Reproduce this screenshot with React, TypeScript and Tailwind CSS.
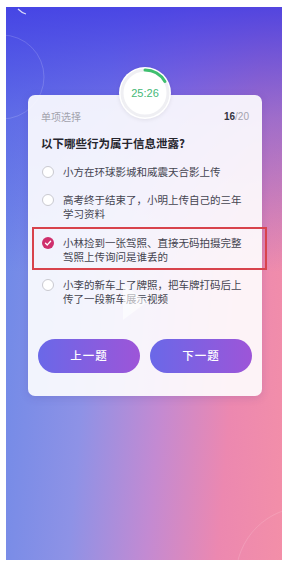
import React from "react";

const Radio: React.FC<{ checked?: boolean }> = ({ checked }) =>
	checked ? (
		<span className="mt-[1px] ml-[1px] flex h-[12px] w-[12px] shrink-0 items-center justify-center rounded-full bg-[#cf2f6c]">
			<svg width="8" height="8" viewBox="0 0 8 8">
				<path d="M1.5 4.2 L3.3 5.9 L6.6 2.2" fill="none" stroke="#fff" strokeWidth="1.4" strokeLinecap="round" strokeLinejoin="round" />
			</svg>
		</span>
	) : (
		<span className="mt-[1px] ml-[1px] h-[12px] w-[12px] shrink-0 rounded-full border border-[#c9c9d0] bg-white" />
	);

const Option: React.FC<{ lines: string[]; checked?: boolean; boxed?: boolean }> = ({ lines, checked, boxed }) => (
	<div className="relative flex items-start">
		{boxed && <span className="pointer-events-none absolute -top-[9px] -bottom-[5px] -left-[9px] -right-[18px] border-2 border-[#d8434c]" />}
		<Radio checked={checked} />
		<p className="ml-[9px] text-[10.5px] leading-[14.5px] text-[#444450] whitespace-nowrap">
			{lines.map((l, i) => (
				<React.Fragment key={i}>
					{i > 0 && <br />}
					{l}
				</React.Fragment>
			))}
		</p>
	</div>
);

const App: React.FC = () => {
	return (
		<div className="w-[287px] h-[567px] bg-white pt-[7px] pl-[6px] pr-[5px] pb-[7px] font-['Noto_Sans_CJK_SC','Noto_Sans',sans-serif]">
			<div className="relative h-full w-full overflow-hidden bg-[linear-gradient(180deg,rgba(66,62,228,0.9)_0%,rgba(80,80,230,0.5)_20%,rgba(90,100,230,0)_48%),linear-gradient(95deg,#6a88e8_0%,#8e92e6_34%,#c38ad2_58%,#ec88b0_80%,#f38fa8_100%)]">
				{/* decorative rings */}
				<svg className="pointer-events-none absolute left-0 top-0" width="276" height="553" viewBox="0 0 276 553">
					<circle cx="-4" cy="70" r="42" fill="none" stroke="rgba(255,255,255,0.16)" strokeWidth="1" />
					<path d="M12 2 Q16 6 20 7" fill="none" stroke="rgba(255,255,255,0.8)" strokeWidth="1.2" />
					<circle cx="300" cy="570" r="70" fill="none" stroke="rgba(255,255,255,0.14)" strokeWidth="1" />
				</svg>

				<div className="relative ml-[22px] mt-[88px] w-[234px] rounded-[7px] bg-white/90 px-[13px] pt-[15px] pb-[23px] shadow-[0_2px_8px_rgba(60,40,140,0.15)]">
					{/* timer */}
					<div className="absolute left-1/2 -top-[28px] h-[52px] w-[52px] -translate-x-1/2 rounded-full bg-white shadow-[0_1px_4px_rgba(0,0,0,0.08)]">
						<svg className="absolute inset-0" width="52" height="52" viewBox="0 0 52 52">
							<circle cx="26" cy="26" r="23" fill="#fff" stroke="#efeff3" strokeWidth="3" />
							<path d="M26 3 A23 23 0 0 1 45.92 14.5" fill="none" stroke="#3fbf6f" strokeWidth="3" strokeLinecap="round" />
						</svg>
						<span className="absolute inset-x-0 top-[19px] text-center text-[11px] leading-[14px] text-[#46b877] font-['Liberation_Sans',sans-serif]">
							25:26
						</span>
					</div>

					<div className="flex items-center justify-between leading-[14px]">
						<span className="text-[10px] text-[#a3a3ad]">单项选择</span>
						<span className="text-[10px] font-['Liberation_Sans',sans-serif]">
							<span className="font-bold text-[#333340]">16</span>
							<span className="text-[#a3a3ad]">/20</span>
						</span>
					</div>

					<h2 className="mt-[11px] text-[11.5px] font-bold leading-[16px] text-[#26262e]">以下哪些行为属于信息泄露?</h2>

					<div className="mt-[14px] flex flex-col gap-[13px]">
						<Option lines={["小方在环球影城和威震天合影上传"]} />
						<Option lines={["高考终于结束了，小明上传自己的三年", "学习资料"]} />
						<div className="mt-[1px]">
							<Option checked boxed lines={["小林捡到一张驾照、直接无码拍摄完整", "驾照上传询问是谁丢的"]} />
						</div>
						<Option lines={["小李的新车上了牌照，把车牌打码后上", "传了一段新车展示视频"]} />
					</div>

					{/* faint video play watermark */}
					<svg className="pointer-events-none absolute left-[92px] top-[186px]" width="30" height="42" viewBox="0 0 30 42">
						<path d="M3 3 L27 21 L3 39 Z" fill="rgba(255,255,255,0.6)" />
					</svg>

					<div className="mt-[32px] -mx-[3px] flex justify-between">
						<button className="h-[34px] w-[102px] rounded-full bg-[linear-gradient(90deg,#6a68e8,#9d55d8)] text-[11.5px] font-medium tracking-[1px] text-white">
							上一题
						</button>
						<button className="h-[34px] w-[102px] rounded-full bg-[linear-gradient(90deg,#6a68e8,#9d55d8)] text-[11.5px] font-medium tracking-[1px] text-white">
							下一题
						</button>
					</div>
				</div>
			</div>
		</div>
	);
};

export default App;
